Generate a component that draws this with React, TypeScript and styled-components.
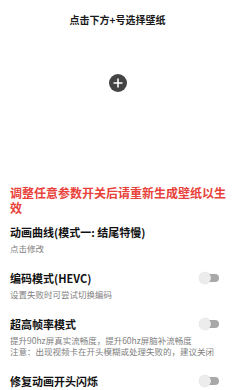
import React from "react";
import styled, { createGlobalStyle } from "styled-components";

const Global = createGlobalStyle`
  html, body { margin: 0; padding: 0; background: #fff; }
  body { font-family: "Noto Sans CJK SC", "Noto Sans", sans-serif; color: #111; }
`;

const Page = styled.div`
  width: 235px;
  height: 390px;
  overflow: hidden;
  display: flex;
  flex-direction: column;
`;

const Header = styled.div`
  height: 40px;
  line-height: 40px;
  text-align: center;
  font-size: 10px;
  font-weight: 700;
  color: #1a1a1a;
`;

const Preview = styled.div`
  height: 94px;
  display: flex;
  align-items: center;
  justify-content: center;
`;

const AddButton = styled.div`
  width: 18px;
  height: 18px;
  border-radius: 50%;
  background: #444;
  display: flex;
  align-items: center;
  justify-content: center;
`;

const Notice = styled.div`
  margin: 59px 6px 8px 10px;
  font-size: 12px;
  line-height: 15px;
  font-weight: 700;
  color: #e8423b;
`;

const List = styled.div`
  display: flex;
  flex-direction: column;
  gap: 15px;
  padding: 0 16px 0 10px;
`;

const Item = styled.div`
  display: flex;
  flex-direction: column;
`;

const Row = styled.div`
  display: flex;
  align-items: center;
  justify-content: space-between;
  height: 18px;
`;

const Title = styled.div`
  font-size: 11px;
  font-weight: 700;
  color: #111;
  white-space: nowrap;
`;

const Desc = styled.div`
  margin-top: 2px;
  font-size: 8.5px;
  line-height: 11px;
  color: #808080;
  white-space: nowrap;
`;

const Switch = styled.div`
  position: relative;
  width: 20px;
  height: 12px;
`;

const Track = styled.div`
  position: absolute;
  left: 4px;
  right: 0;
  top: 2px;
  height: 8px;
  border-radius: 4px;
  background: #a8a8a8;
`;

const Thumb = styled.div`
  position: absolute;
  left: 0;
  top: 0;
  width: 12px;
  height: 12px;
  border-radius: 50%;
  background: #ececec;
  box-shadow: 0 0 1px rgba(0, 0, 0, 0.2);
`;

const Toggle = () => (
  <Switch>
    <Track />
    <Thumb />
  </Switch>
);

const items: { title: string; desc: string[]; toggle: boolean }[] = [
  { title: "动画曲线(模式一: 结尾特慢)", desc: ["点击修改"], toggle: false },
  { title: "编码模式(HEVC)", desc: ["设置失败时可尝试切换编码"], toggle: true },
  {
    title: "超高帧率模式",
    desc: ["提升90hz屏真实流畅度，提升60hz屏脑补流畅度", "注意：出现视频卡在开头模糊或处理失败的，建议关闭"],
    toggle: true,
  },
  { title: "修复动画开头闪烁", desc: [], toggle: true },
];

export default function App() {
  return (
    <Page>
      <Global />
      <Header>点击下方+号选择壁纸</Header>
      <Preview>
        <AddButton>
          <svg width="10" height="10" viewBox="0 0 10 10">
            <path d="M5 0.5V9.5M0.5 5H9.5" stroke="#fff" strokeWidth="1.6" />
          </svg>
        </AddButton>
      </Preview>
      <Notice>调整任意参数开关后请重新生成壁纸以生效</Notice>
      <List>
        {items.map((it) => (
          <Item key={it.title}>
            <Row>
              <Title>{it.title}</Title>
              {it.toggle && <Toggle />}
            </Row>
            {it.desc.length > 0 && (
              <Desc>
                {it.desc.map((d) => (
                  <div key={d}>{d}</div>
                ))}
              </Desc>
            )}
          </Item>
        ))}
      </List>
    </Page>
  );
}
